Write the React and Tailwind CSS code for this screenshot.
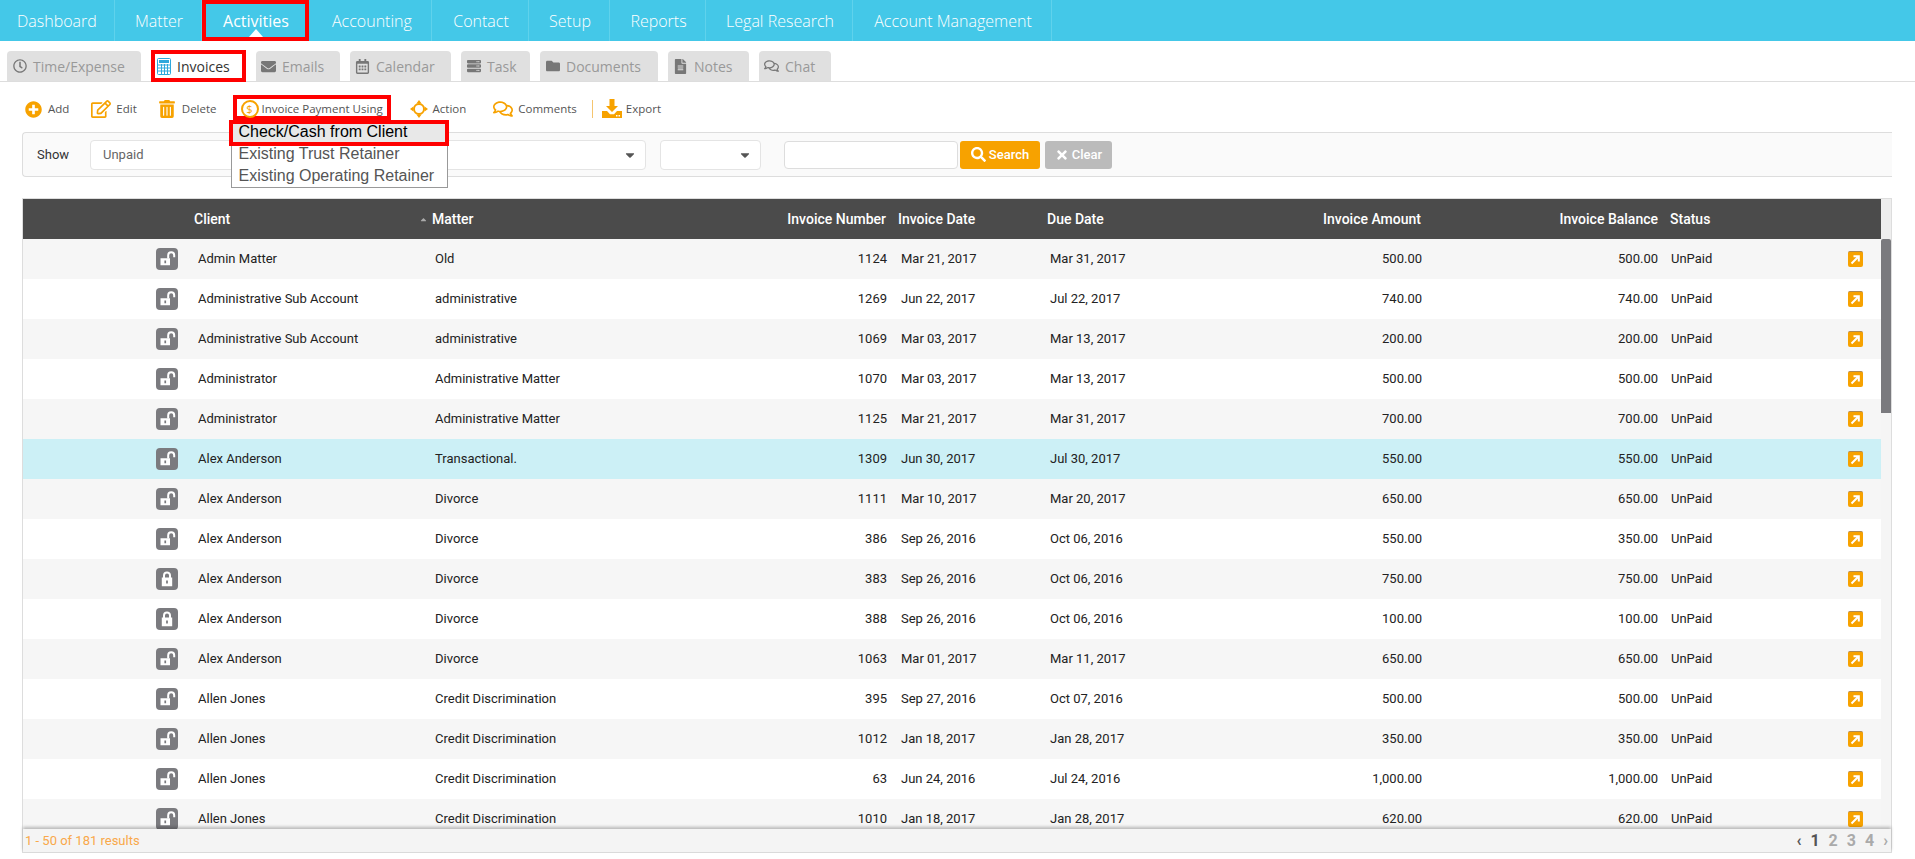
import React from 'react';
import {
  FaPlusCircle, FaRegEdit, FaTrashAlt, FaRegComments, FaRegClock, FaEnvelope,
  FaRegCalendarAlt, FaServer, FaFolder, FaFileAlt, FaSearch, FaTimes,
  FaCaretDown, FaCaretUp,
} from 'react-icons/fa';

const navItems = [
  { label: 'Dashboard', w: 'w-[115px] pl-[17px]' },
  { label: 'Matter', w: 'w-[87px] justify-center pl-[2px]' },
  { label: 'Activities', w: 'w-[107px] justify-center pl-[1px]', active: true },
  { label: 'Accounting', w: 'w-[123px] pl-[23px]' },
  { label: 'Contact', w: 'w-[97px] justify-center pl-[2px]' },
  { label: 'Setup', w: 'w-[81px] justify-center pl-[2px]' },
  { label: 'Reports', w: 'w-[96px] justify-center pl-[2px]' },
  { label: 'Legal Research', w: 'w-[147px] justify-center pl-[2px]' },
  { label: 'Account Management', w: 'w-[199px] justify-center pl-[2px]' },
];

const Calc = () => (
  <svg width="14" height="17" viewBox="0 0 14 17" className="shrink-0">
    <rect x="0.5" y="0.5" width="13" height="16" rx="1" fill="#fff" stroke="#2ea8dc" />
    <rect x="2" y="2" width="10" height="3" fill="#2ea8dc" />
    <path d="M1 7h12M1 10h12M1 13h12M4.5 6v10M7.5 6v10M10.5 6v10" stroke="#2ea8dc" strokeWidth="1" />
  </svg>
);

const tabs = [
  { label: 'Time/Expense', icon: <FaRegClock size={14} />, w: 'w-[134px]' },
  { label: 'Invoices', icon: <Calc />, w: 'w-[95px]', active: true },
  { label: 'Emails', icon: <FaEnvelope size={15} />, w: 'w-[84px]' },
  { label: 'Calendar', icon: <FaRegCalendarAlt size={15} />, w: 'w-[101px]' },
  { label: 'Task', icon: <FaServer size={14} />, w: 'w-[69px]' },
  { label: 'Documents', icon: <FaFolder size={14} />, w: 'w-[118px]' },
  { label: 'Notes', icon: <FaFileAlt size={15} />, w: 'w-[81px]' },
  { label: 'Chat', icon: <FaRegComments size={16} />, w: 'w-[72px]' },
];

const rows = [
  ['Admin Matter', 'Old', '1124', 'Mar 21, 2017', 'Mar 31, 2017', '500.00', '500.00'],
  ['Administrative Sub Account', 'administrative', '1269', 'Jun 22, 2017', 'Jul 22, 2017', '740.00', '740.00'],
  ['Administrative Sub Account', 'administrative', '1069', 'Mar 03, 2017', 'Mar 13, 2017', '200.00', '200.00'],
  ['Administrator', 'Administrative Matter', '1070', 'Mar 03, 2017', 'Mar 13, 2017', '500.00', '500.00'],
  ['Administrator', 'Administrative Matter', '1125', 'Mar 21, 2017', 'Mar 31, 2017', '700.00', '700.00'],
  ['Alex Anderson', 'Transactional.', '1309', 'Jun 30, 2017', 'Jul 30, 2017', '550.00', '550.00'],
  ['Alex Anderson', 'Divorce', '1111', 'Mar 10, 2017', 'Mar 20, 2017', '650.00', '650.00'],
  ['Alex Anderson', 'Divorce', '386', 'Sep 26, 2016', 'Oct 06, 2016', '550.00', '350.00'],
  ['Alex Anderson', 'Divorce', '383', 'Sep 26, 2016', 'Oct 06, 2016', '750.00', '750.00', true],
  ['Alex Anderson', 'Divorce', '388', 'Sep 26, 2016', 'Oct 06, 2016', '100.00', '100.00', true],
  ['Alex Anderson', 'Divorce', '1063', 'Mar 01, 2017', 'Mar 11, 2017', '650.00', '650.00'],
  ['Allen Jones', 'Credit Discrimination', '395', 'Sep 27, 2016', 'Oct 07, 2016', '500.00', '500.00'],
  ['Allen Jones', 'Credit Discrimination', '1012', 'Jan 18, 2017', 'Jan 28, 2017', '350.00', '350.00'],
  ['Allen Jones', 'Credit Discrimination', '63', 'Jun 24, 2016', 'Jul 24, 2016', '1,000.00', '1,000.00'],
  ['Allen Jones', 'Credit Discrimination', '1010', 'Jan 18, 2017', 'Jan 28, 2017', '620.00', '620.00'],
];

const gridCols = 'grid grid-cols-[171px_238px_328px_126px_160px_254px_121px_237px_190px_33px]';

const ActionIcon = () => (
  <svg width="18" height="18" viewBox="0 0 18 18" fill="#f7a200">
    <path d="M9 0l2.6 3.4H6.4zM9 18l-2.6-3.4h5.2zM0 9l3.4-2.6v5.2zM18 9l-3.4 2.6V6.4z" />
    <circle cx="9" cy="9" r="5" fill="none" stroke="#f7a200" strokeWidth="2" />
  </svg>
);

const ExportIcon = () => (
  <svg width="20" height="20" viewBox="0 0 20 20" fill="#f7a200">
    <path d="M7.5 0h5v7h3.5L10 13 4 7h3.5z" />
    <path d="M0 12h5l3 3.2h4l3-3.2h5v7H0z" />
    <rect x="14" y="16" width="1.5" height="1.5" fill="#fff" />
    <rect x="16.5" y="16" width="1.5" height="1.5" fill="#fff" />
  </svg>
);

const OpenLock = () => (
  <svg width="22" height="22" viewBox="0 0 22 22" fill="#fff">
    <path fillRule="evenodd" d="M4.5 10.2h9.5v7H4.5zM8.4 12.6h1.7v2.6H8.4z" />
    <path d="M12.2 10.5V7.3a3 3 0 0 1 6 0v2" fill="none" stroke="#fff" strokeWidth="2" />
  </svg>
);

const ClosedLock = () => (
  <svg width="22" height="22" viewBox="0 0 22 22" fill="#fff">
    <path fillRule="evenodd" d="M5.8 9.5h10.4v8.7H5.8zM10.1 12.4h1.8v3h-1.8z" />
    <path d="M8 10V7.4a3 3 0 0 1 6 0V10" fill="none" stroke="#fff" strokeWidth="2" />
  </svg>
);

const OpenArrow = () => (
  <span className="flex h-[16px] w-[15px] items-center justify-center rounded-[2px] bg-[#f7a200] border-t border-[#b08a50]">
    <svg width="11" height="11" viewBox="0 0 11 11" fill="none" stroke="#fff" strokeWidth="2">
      <path d="M1.5 9.5L8 3M3.5 2.2h5.3v5.3" />
    </svg>
  </span>
);

const ToolItem = ({ icon, label, slot, className = '', gap = 'gap-[5px]' }) => (
  <div className={`flex items-center ${gap} ${className}`}>
    <span className={`flex justify-center text-[#f7a200] ${slot}`}>{icon}</span>
    <span>{label}</span>
  </div>
);

const App = () => {
  return (
    <div className="w-[1915px] h-[859px] overflow-hidden bg-white font-['Open_Sans',sans-serif]">
      {/* top nav */}
      <div className="flex h-[41px] bg-[#44c8e8] text-white text-[16px] font-light">
        {navItems.map((n) => (
          <div
            key={n.label}
            className={
              n.active
                ? `relative flex items-center border-[4px] border-[#f00] font-normal ${n.w}`
                : `flex items-center border-r border-[#5fd2ec] ${n.w}`
            }
          >
            {n.label}
            {n.active && (
              <span className="absolute bottom-0 left-1/2 -ml-[7px] h-0 w-0 border-x-[7px] border-b-[8px] border-x-transparent border-b-white" />
            )}
          </div>
        ))}
      </div>

      {/* sub tabs */}
      <div className="flex h-[41px] gap-[10px] border-b border-[#ddd] pl-[7px] pt-[10px] text-[14px]">
        {tabs.map((t) =>
          t.active ? (
            <div key={t.label} className={`flex items-center gap-[6px] border-[4px] border-[#f00] bg-white text-[#333] -mt-[1px] h-[32px] pl-[2px] ${t.w}`}>
              {t.icon}
              {t.label}
            </div>
          ) : (
            <div key={t.label} className={`flex items-center gap-[6px] rounded-t-[4px] bg-[#e0e0e0] pl-[5px] text-[#999] ${t.w}`}>
              <span className="flex w-[15px] justify-center text-[#777]">{t.icon}</span>
              {t.label}
            </div>
          )
        )}
      </div>

      {/* toolbar */}
      <div className="flex h-[50px] items-center pl-[25px] pt-[4px] text-[11.5px] text-[#555]">
        <ToolItem icon={<FaPlusCircle size={17} />} slot="w-[17px]" label="Add" gap="gap-[6px]" />
        <ToolItem icon={<FaRegEdit size={20} />} slot="w-[20px]" label="Edit" className="ml-[22px]" />
        <ToolItem icon={<FaTrashAlt size={18} />} slot="w-[16px]" label="Delete" gap="gap-[7px]" className="ml-[22px]" />
        <div className="relative ml-[16px]">
          <div className="flex h-[25px] w-[158px] items-center gap-[3px] border-[4px] border-[#f00] pl-[4px] pt-[3px] -mt-[4px]">
            <span className="flex h-[18px] w-[18px] shrink-0 items-center justify-center rounded-full border-2 border-[#f7a200] text-[11px] leading-none text-[#f7a200]">$</span>
            <span className="whitespace-nowrap">Invoice Payment Using</span>
          </div>
          <div className="absolute left-[-2px] top-[21px] z-10 w-[217px] border-x border-b border-[#999] bg-white font-['Liberation_Sans',sans-serif] text-[16px] leading-[22px] text-[#555]">
            <div className="relative -ml-[3px] -mr-[2px] h-[26px] border-[4px] border-[#f00] bg-[#e8e8e8] pl-[6px] leading-[16px] text-black">Check/Cash from Client</div>
            <div className="-mt-[3px] pl-[7px]">Existing Trust Retainer</div>
            <div className="pl-[7px]">Existing Operating Retainer</div>
          </div>
        </div>
        <ToolItem icon={<ActionIcon />} slot="w-[18px]" label="Action" className="ml-[19px]" />
        <ToolItem icon={<FaRegComments size={20} />} slot="w-[20px]" label="Comments" className="ml-[27px]" />
        <span className="ml-[15px] h-[18px] w-px bg-[#f5c56f]" />
        <ToolItem icon={<ExportIcon />} slot="w-[20px]" label="Export" gap="gap-[4px]" className="ml-[9px]" />
      </div>

      {/* filter bar */}
      <div className="ml-[22px] flex h-[45px] w-[1870px] items-center rounded-l-[4px] border-y border-l border-[#ddd] bg-[#fafafa] pl-[14px] font-['Roboto',sans-serif]">
        <span className="w-[53px] text-[13px] text-[#333]">Show</span>
        <div className="flex h-[30px] w-[556px] items-center justify-between rounded-[4px] border border-[#e4e4e4] bg-white pl-[12px] pr-[8px] text-[13px] text-[#666]">
          Unpaid
          <FaCaretDown size={14} className="text-[#555]" />
        </div>
        <div className="ml-[14px] flex h-[30px] w-[101px] items-center justify-end rounded-[4px] border border-[#e4e4e4] bg-white pr-[8px]">
          <FaCaretDown size={14} className="text-[#555]" />
        </div>
        <input className="ml-[23px] h-[28px] w-[174px] rounded-[4px] border border-[#ddd] bg-white outline-none" />
        <button className="ml-[2px] flex h-[28px] w-[80px] items-center justify-center gap-[3px] rounded-[3px] bg-[#f7a200] text-[13px] font-medium text-white">
          <FaSearch size={15} /> Search
        </button>
        <button className="ml-[5px] flex h-[28px] w-[67px] items-center justify-center gap-[3px] rounded-[3px] bg-[#bbb] text-[13px] font-medium text-white">
          <FaTimes size={14} /> Clear
        </button>
      </div>

      {/* grid */}
      <div className="ml-[22px] mt-[21px] flex h-[655px] w-[1870px] flex-col border-x border-y border-[#ddd] font-['Roboto',sans-serif]">
        <div className="flex min-h-0 flex-1">
          <div className="flex min-w-0 flex-1 flex-col">
            <div className={`${gridCols} h-[40px] shrink-0 items-center bg-[#4b4b4b] text-[14px] font-medium text-white`}>
              <span />
              <span>Client</span>
              <span className="relative">
                <FaCaretUp size={9} className="absolute -left-[13px] top-[6px] text-[#aaa]" />
                Matter
              </span>
              <span className="text-right">Invoice Number</span>
              <span className="pl-[12px]">Invoice Date</span>
              <span className="pl-[1px]">Due Date</span>
              <span className="text-right">Invoice Amount</span>
              <span className="text-right">Invoice Balance</span>
              <span className="pl-[12px]">Status</span>
              <span />
            </div>
            <div className="min-h-0 flex-1 overflow-hidden text-[13px] text-[#222]">
              {rows.map((r, i) => (
                <div
                  key={i}
                  className={`${gridCols} h-[40px] items-center ${i === 5 ? 'bg-[#ccf0f6]' : i % 2 === 0 ? 'bg-[#f6f6f6]' : 'bg-white'}`}
                >
                  <span className="flex justify-end pr-[16px]">
                    <span className="flex h-[22px] w-[22px] rounded-[4px] bg-[#7b7b7f]">
                      {r[7] ? <ClosedLock /> : <OpenLock />}
                    </span>
                  </span>
                  <span className="pl-[4px]">{r[0]}</span>
                  <span className="pl-[3px]">{r[1]}</span>
                  <span className="-mr-[1px] text-right">{r[2]}</span>
                  <span className="pl-[15px]">{r[3]}</span>
                  <span className="pl-[4px]">{r[4]}</span>
                  <span className="-mr-[1px] text-right">{r[5]}</span>
                  <span className="text-right">{r[6]}</span>
                  <span className="pl-[13px]">UnPaid</span>
                  <span className="flex"><OpenArrow /></span>
                </div>
              ))}
            </div>
          </div>
          {/* scrollbar */}
          <div className="flex w-[10px] shrink-0 flex-col bg-[#f5f5f5]">
            <div className="h-[40px] bg-[#eee]" />
            <div className="h-[174px] rounded-t-[2px] bg-[#7a7a7e]" />
          </div>
        </div>
        <div className="relative flex h-[23px] shrink-0 items-center justify-between bg-[#f4f4f4] pl-[2px] pr-[3px] text-[13px] text-[#f9a84a] shadow-[0_-2px_3px_rgba(0,0,0,0.25)]">
          <span>1 - 50 of 181 results</span>
          <div className="flex items-center gap-[9px] text-[16px] font-bold text-[#aaa]">
            <span className="text-[#555]">‹</span>
            <span className="text-[#555]">1</span>
            <span>2</span>
            <span>3</span>
            <span>4</span>
            <span>›</span>
          </div>
        </div>
      </div>
    </div>
  );
};

export default App;
